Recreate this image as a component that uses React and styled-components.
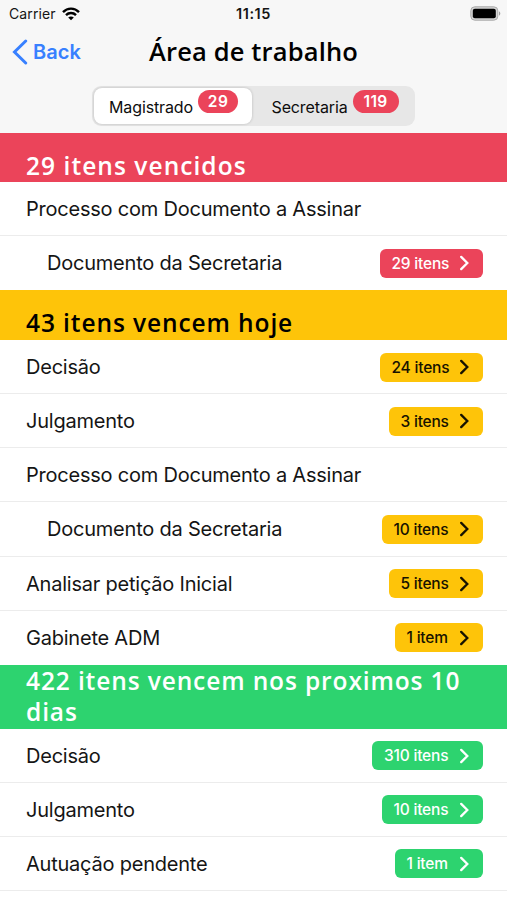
import React from 'react'
import styled, { createGlobalStyle } from 'styled-components'

const GlobalStyle = createGlobalStyle`
  * {
    box-sizing: border-box;
  }
  body {
    margin: 0;
    background: #ffffff;
    color: #151515;
    font-family: Inter, "Liberation Sans", sans-serif;
  }
`

const colors = {
  danger: '#eb445a',
  warning: '#fec409',
  success: '#2dd36f',
}

const Screen = styled.div`
  width: 507px;
  height: 900px;
  overflow: hidden;
  background: #ffffff;
`

const Header = styled.header`
  height: 133px;
  background: #f7f7f7;
`

const StatusBar = styled.div`
  display: grid;
  grid-template-columns: 1fr auto 1fr;
  align-items: center;
  height: 27px;
  padding: 0 6px 0 9px;
  font-size: 14px;
  line-height: 27px;
`

const Carrier = styled.div`
  display: flex;
  align-items: center;
  gap: 6px;
  letter-spacing: 0.1px;
`

const Clock = styled.div`
  margin-right: 3px;
  font-size: 14.5px;
  font-weight: 600;
  letter-spacing: 0.6px;
`

const Battery = styled.svg`
  justify-self: end;
`

const NavBar = styled.div`
  display: grid;
  grid-template-columns: 1fr auto 1fr;
  align-items: center;
  height: 49px;
  padding: 0 12px;
`

const Back = styled.a`
  display: flex;
  align-items: center;
  gap: 5px;
  color: #3880ff;
  font-size: 20px;
  font-weight: 600;
  letter-spacing: 0.1px;
  cursor: pointer;
`

const Title = styled.h1`
  margin: 0 0 2px;
  color: #000000;
  font-family: "Open Sans", "Noto Sans", sans-serif;
  font-size: 25.5px;
  font-weight: 600;
  line-height: 32px;
  letter-spacing: 0.15px;
`

const Segment = styled.div`
  display: flex;
  width: 323px;
  height: 40px;
  margin: 10px auto 0 92px;
  padding: 2px;
  border-radius: 9px;
  background: #e7e7e7;
`

const SegmentButton = styled.div`
  display: flex;
  flex: 0 0 ${(p) => p.$width}px;
  padding: 2px 0 0 ${(p) => p.$indent}px;
  gap: 5px;
  border-radius: 8px;
  background: ${(p) => (p.$active ? '#ffffff' : 'transparent')};
  box-shadow: ${(p) => (p.$active ? '0 0 3px rgba(0, 0, 0, 0.2)' : 'none')};
  color: #0d0d0d;
  font-size: 16px;
  line-height: 35px;
  letter-spacing: -0.12px;
`

const Count = styled.span`
  width: ${(p) => p.$width}px;
  height: 23px;
  border-radius: 12px;
  background: ${colors.danger};
  color: #ffffff;
  font-size: 15.5px;
  font-weight: 600;
  line-height: 23px;
  letter-spacing: 0.4px;
  text-align: center;
`

const Divider = styled.h2`
  display: flex;
  align-items: flex-end;
  height: ${(p) => p.$height}px;
  margin: 0;
  padding: 0 40px 1px 26px;
  background: ${(p) => colors[p.$tone]};
  color: ${(p) => (p.$tone === 'warning' ? '#000000' : '#ffffff')};
  font-family: "Open Sans", "Noto Sans", sans-serif;
  font-size: 24.5px;
  font-weight: 600;
  line-height: 31.5px;
  letter-spacing: ${(p) => p.$spacing}px;
`

const Row = styled.div`
  display: flex;
  align-items: center;
  justify-content: space-between;
  height: 54.15px;
  padding: 1px 24.5px 0 ${(p) => (p.$nested ? 47 : 26)}px;
  border-bottom: 1px solid ${(p) => (p.$last ? 'transparent' : '#ececec')};
`

const Label = styled.span`
  font-size: 20px;
  letter-spacing: -0.22px;
  white-space: nowrap;
`

const Badge = styled.span`
  display: flex;
  align-items: center;
  justify-content: space-between;
  width: ${(p) => p.$width}px;
  height: 29px;
  padding: 0 14px 0 12px;
  border-radius: 6px;
  background: ${(p) => colors[p.$tone]};
  color: ${(p) => (p.$tone === 'warning' ? '#171200' : '#ffffff')};
  font-size: 15.5px;
  font-weight: 500;
  letter-spacing: -0.2px;
  white-space: nowrap;
`

const sections = [
  {
    title: '29 itens vencidos',
    tone: 'danger',
    height: 49.2,
    spacing: 1.05,
    rows: [
      { label: 'Processo com Documento a Assinar' },
      { label: 'Documento da Secretaria', nested: true, items: '29 itens', width: 103 },
    ],
  },
  {
    title: '43 itens vencem hoje',
    tone: 'warning',
    height: 49.5,
    spacing: 0.9,
    rows: [
      { label: 'Decisão', items: '24 itens', width: 103 },
      { label: 'Julgamento', items: '3 itens', width: 94 },
      { label: 'Processo com Documento a Assinar' },
      { label: 'Documento da Secretaria', nested: true, items: '10 itens', width: 101 },
      { label: 'Analisar petição Inicial', items: '5 itens', width: 94 },
      { label: 'Gabinete ADM', items: '1 item', width: 88 },
    ],
  },
  {
    title: '422 itens vencem nos proximos 10 dias',
    tone: 'success',
    height: 63.8,
    spacing: 0.88,
    rows: [
      { label: 'Decisão', items: '310 itens', width: 110.5 },
      { label: 'Julgamento', items: '10 itens', width: 101 },
      { label: 'Autuação pendente', items: '1 item', width: 88, line: true },
    ],
  },
]

const WifiIcon = () => (
  <svg width="18" height="14" viewBox="0 0 18 14" fill="none" stroke="#000" strokeWidth="2.4">
    <path d="M1 5.1C5.5 0.5 12.5 0.5 17 5.1" />
    <path d="M4 8.1C6.8 5.3 11.2 5.3 14 8.1" />
    <path d="M9 13.2L6.2 10.5C7.8 9 10.2 9 11.8 10.5Z" fill="#000" stroke="none" />
  </svg>
)

const BackIcon = () => (
  <svg width="16" height="26" viewBox="0 0 16 26" fill="none" stroke="currentColor" strokeWidth="3" strokeLinecap="round">
    <path d="M13.7 2L2.5 13L13.7 24" />
  </svg>
)

const ChevronIcon = () => (
  <svg width="9" height="16" viewBox="0 0 9 16" fill="none" stroke="currentColor" strokeWidth="2.3" strokeLinecap="round">
    <path d="M1.2 1.9L7.3 8L1.2 14.1" />
  </svg>
)

const App = () => {
  return (
    <Screen>
      <GlobalStyle />
      <Header>
        <StatusBar>
          <Carrier>
            Carrier <WifiIcon />
          </Carrier>
          <Clock>11:15</Clock>
          <Battery width="31" height="15" viewBox="0 0 31 15">
            <rect x="0.8" y="0.8" width="27" height="13.4" rx="4" fill="#d5d5d5" stroke="#a9a9a9" />
            <rect x="2.8" y="2.8" width="23" height="9.4" rx="2" fill="#000" />
            <path d="M29 5.3C30.8 6 30.8 9 29 9.7Z" fill="#a0a0a0" />
          </Battery>
        </StatusBar>
        <NavBar>
          <Back>
            <BackIcon /> Back
          </Back>
          <Title>Área de trabalho</Title>
        </NavBar>
        <Segment>
          <SegmentButton $active $width={158} $indent={15}>
            <span>Magistrado</span>
            <Count $width={40}>29</Count>
          </SegmentButton>
          <SegmentButton $width={161} $indent={19.5}>
            <span>Secretaria</span>
            <Count $width={46}>119</Count>
          </SegmentButton>
        </Segment>
      </Header>
      {sections.map((section) => (
        <section key={section.title}>
          <Divider $tone={section.tone} $height={section.height} $spacing={section.spacing}>
            {section.title}
          </Divider>
          {section.rows.map((row, i) => (
            <Row key={i} $nested={row.nested} $last={i === section.rows.length - 1 && !row.line}>
              <Label>{row.label}</Label>
              {row.items && (
                <Badge $tone={section.tone} $width={row.width}>
                  {row.items}
                  <ChevronIcon />
                </Badge>
              )}
            </Row>
          ))}
        </section>
      ))}
    </Screen>
  )
}

export default App
